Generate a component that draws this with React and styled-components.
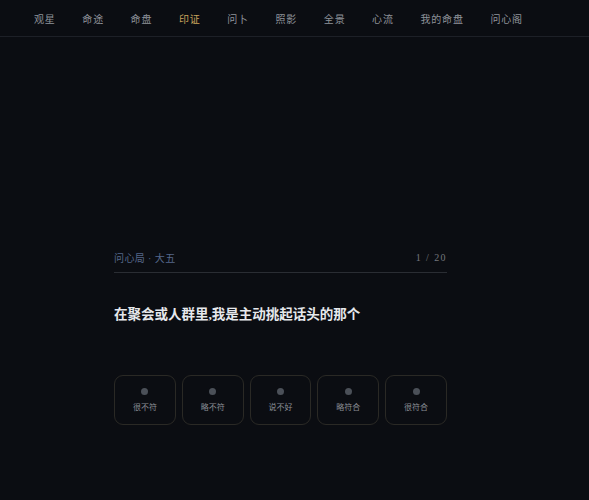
import React from "react";
import styled, { createGlobalStyle } from "styled-components";

const GlobalStyle = createGlobalStyle`
  html, body {
    margin: 0;
    padding: 0;
    background: #0b0d12;
  }
  body {
    font-family: "Liberation Serif", "Noto Sans CJK SC", serif;
    color: #c8ccd2;
  }
`;

const Page = styled.div`
  min-height: 500px;
  background: #0b0d12;
`;

const Nav = styled.nav`
  display: flex;
  align-items: center;
  gap: 26.6px;
  height: 37px;
  padding: 0 34px;
  border-bottom: 1px solid #1d2027;
  box-sizing: border-box;
`;

const NavItem = styled.span`
  font-size: 10px;
  letter-spacing: 0.85px;
  color: ${(p) => (p.$active ? "#c9a45c" : "#8f939a")};
  white-space: nowrap;
`;

const Quiz = styled.section`
  width: 333px;
  margin: 213px 0 0 114px;
`;

const Head = styled.div`
  display: flex;
  justify-content: space-between;
  align-items: center;
  padding-bottom: 7px;
  border-bottom: 1px solid #2a2d33;
  font-size: 10px;
`;

const Tag = styled.span`
  color: #56688a;
  letter-spacing: 0.4px;
`;

const Count = styled.span`
  color: #74777d;
  letter-spacing: 1.4px;
`;

const Question = styled.h2`
  margin: 32px 0 0;
  font-size: 13.5px;
  font-weight: 700;
  color: #e6e8ec;
  line-height: 20px;
`;

const Options = styled.div`
  display: grid;
  grid-template-columns: repeat(5, 1fr);
  gap: 6px;
  margin-top: 50px;
`;

const Option = styled.button`
  height: 50px;
  display: flex;
  flex-direction: column;
  align-items: center;
  justify-content: center;
  gap: 6px;
  background: transparent;
  border: 1px solid #2a2925;
  border-radius: 9px;
  font-family: inherit;
  cursor: pointer;
  padding: 0;
`;

const Dot = styled.span`
  width: 7px;
  height: 7px;
  border-radius: 50%;
  background: #4b5058;
`;

const Label = styled.span`
  font-size: 8px;
  color: #8a8e95;
`;

const navLinks = ["观星", "命途", "命盘", "印证", "问卜", "照影", "全景", "心流", "我的命盘", "问心阁"];
const choices = ["很不符", "略不符", "说不好", "略符合", "很符合"];

export default function App() {
  return (
    <Page>
      <GlobalStyle />
      <Nav>
        {navLinks.map((n) => (
          <NavItem key={n} $active={n === "印证"}>
            {n}
          </NavItem>
        ))}
      </Nav>
      <Quiz>
        <Head>
          <Tag>问心局 · 大五</Tag>
          <Count>1 / 20</Count>
        </Head>
        <Question>在聚会或人群里,我是主动挑起话头的那个</Question>
        <Options>
          {choices.map((c) => (
            <Option key={c}>
              <Dot />
              <Label>{c}</Label>
            </Option>
          ))}
        </Options>
      </Quiz>
    </Page>
  );
}
